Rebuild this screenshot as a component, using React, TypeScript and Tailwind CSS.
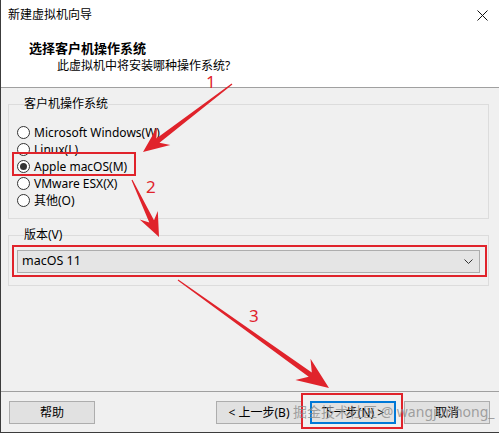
import React from 'react';

const font = { fontFamily: '"Noto Sans", "Noto Sans CJK SC", sans-serif' };

// tapered arrow with barbed head, built from tail -> tip
const arrowPoints = (tx: number, ty: number, px: number, py: number, headLen = 24, headW = 10) => {
  const dx = px - tx;
  const dy = py - ty;
  const len = Math.hypot(dx, dy);
  const ux = dx / len;
  const uy = dy / len;
  const nx = -uy;
  const ny = ux;
  const at = (d: number, w: number) => `${(tx + ux * d + nx * w).toFixed(1)},${(ty + uy * d + ny * w).toFixed(1)}`;
  const notch = len - headLen * 0.72;
  const base = len - headLen;
  return [
    at(0, 0.6),
    at(notch, 2.6),
    at(base, headW),
    at(len, 0),
    at(base, -headW),
    at(notch, -2.6),
    at(0, -0.6),
  ].join(' ');
};

const Radio = ({ label, checked = false }: { label: string; checked?: boolean }) => (
  <label className="flex items-center h-[17px] gap-[4px] text-[12px] text-black">
    <span className="w-[13px] h-[13px] rounded-full border border-[#333] bg-white flex items-center justify-center">
      {checked && <span className="w-[7px] h-[7px] rounded-full bg-[#333]" />}
    </span>
    <span>{label}</span>
  </label>
);

const Button = ({ children, primary = false }: { children: React.ReactNode; primary?: boolean }) => (
  <button
    className={
      primary
        ? 'w-[86px] h-[23px] bg-[#e1e1e1] border-2 border-[#0078d7] text-[12px] text-black flex items-center justify-center'
        : 'w-[86px] h-[23px] bg-[#e1e1e1] border border-[#adadad] text-[12px] text-black flex items-center justify-center'
    }
  >
    {children}
  </button>
);

export default function App() {
  return (
    <div
      className="relative w-[499px] h-[433px] bg-[#f0f0f0] flex flex-col overflow-hidden border-l border-b border-[#3c3c3c]"
      style={font}
    >
      {/* header */}
      <div className="bg-white border-b border-[#a0a0a0] h-[88px] shrink-0">
        <div className="h-[30px] flex items-center justify-between pl-[7px] pr-[10px]">
          <span className="text-[12px] text-black">新建虚拟机向导</span>
          <svg width="11" height="11" viewBox="0 0 11 11" className="mr-[1px]">
            <path d="M0.5 0.5 L10.5 10.5 M10.5 0.5 L0.5 10.5" stroke="#111" strokeWidth="1" />
          </svg>
        </div>
        <div className="pl-[28px] mt-[10px] text-[13px] font-bold leading-[16px] text-black">选择客户机操作系统</div>
        <div className="pl-[56px] mt-[2px] text-[12px] leading-[16px] text-black">此虚拟机中将安装哪种操作系统?</div>
      </div>

      {/* body */}
      <div className="flex flex-col px-[7px] pt-[8px] gap-[8px]">
        <fieldset className="border border-[#dcdcdc] pl-[8px] pt-[12px] pb-[9px] w-[481px]">
          <legend className="ml-[7px] px-0 text-[12px] leading-[16px] text-black">客户机操作系统</legend>
          <Radio label="Microsoft Windows(W)" />
          <Radio label="Linux(L)" />
          <Radio label="Apple macOS(M)" checked />
          <Radio label="VMware ESX(X)" />
          <Radio label="其他(O)" />
        </fieldset>

        <fieldset className="border border-[#dcdcdc] px-[8px] pt-[7px] pb-[12px] w-[481px]">
          <legend className="ml-[7px] px-0 text-[12px] leading-[16px] text-black">版本(V)</legend>
          <div className="h-[23px] bg-[#e5e5e5] border border-[#adadad] flex items-center justify-between pl-[4px] pr-[6px]">
            <span className="text-[12.5px] text-black">macOS 11</span>
            <svg width="9" height="5" viewBox="0 0 9 5">
              <path d="M0.5 0.5 L4.5 4.5 L8.5 0.5" fill="none" stroke="#333" strokeWidth="1" />
            </svg>
          </div>
        </fieldset>
      </div>

      <div className="flex-1" />

      {/* footer */}
      <div className="border-t border-[#a0a0a0] h-[41px] shrink-0 flex items-start pt-[9px] pl-[8px] pr-[9px]">
        <Button>帮助</Button>
        <div className="flex-1" />
        <div className="flex gap-[8px]">
          <Button>&lt; 上一步(B)</Button>
          <Button primary>下一步(N) &gt;</Button>
          <Button>取消</Button>
        </div>
      </div>

      {/* annotations */}
      <div className="absolute left-[11px] top-[152px] w-[124px] h-[24px] border-2 border-[#e0232b]" />
      <div className="absolute left-[11px] top-[245px] w-[475px] h-[32px] border-2 border-[#e0232b]" />
      <div className="absolute left-[300px] top-[393px] w-[102px] h-[36px] border-2 border-[#e0232b]" />

      <svg className="absolute left-0 top-0 pointer-events-none" width="499" height="433">
        <polygon points={arrowPoints(231, 84, 142, 152, 26, 11)} fill="#e0232b" />
        <polygon points={arrowPoints(131, 180, 158, 237, 24, 10)} fill="#e0232b" />
        <polygon points={arrowPoints(177, 280, 328, 388, 32, 13)} fill="#e0232b" />
      </svg>
      <span className="absolute left-[205px] top-[72px] text-[17px] leading-[20px] text-[#e0232b]">1</span>
      <span className="absolute left-[145px] top-[177px] text-[17px] leading-[20px] text-[#e0232b]">2</span>
      <span className="absolute left-[248px] top-[306px] text-[17px] leading-[20px] text-[#e0232b]">3</span>

      <span className="absolute left-[292px] top-[402px] text-[14px] leading-[20px] text-[#8c8c8c]/80 whitespace-nowrap">
        掘金技术社区 @ wangjunhong_
      </span>
    </div>
  );
}
